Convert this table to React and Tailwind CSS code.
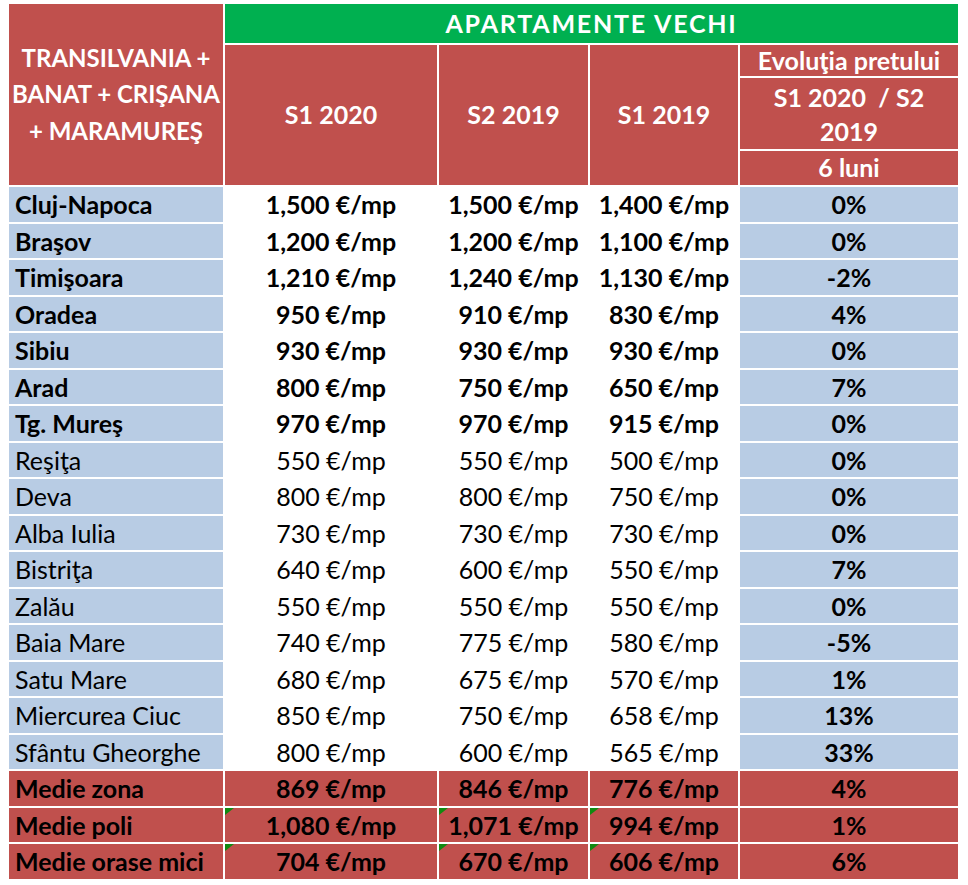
import React from "react";

const rows = [
  ["Cluj-Napoca", "1,500 €/mp", "1,500 €/mp", "1,400 €/mp", "0%", "b"],
  ["Braşov", "1,200 €/mp", "1,200 €/mp", "1,100 €/mp", "0%", "b"],
  ["Timişoara", "1,210 €/mp", "1,240 €/mp", "1,130 €/mp", "-2%", "b"],
  ["Oradea", "950 €/mp", "910 €/mp", "830 €/mp", "4%", "b"],
  ["Sibiu", "930 €/mp", "930 €/mp", "930 €/mp", "0%", "b"],
  ["Arad", "800 €/mp", "750 €/mp", "650 €/mp", "7%", "b"],
  ["Tg. Mureş", "970 €/mp", "970 €/mp", "915 €/mp", "0%", "b"],
  ["Reşiţa", "550 €/mp", "550 €/mp", "500 €/mp", "0%", "r"],
  ["Deva", "800 €/mp", "800 €/mp", "750 €/mp", "0%", "r"],
  ["Alba Iulia", "730 €/mp", "730 €/mp", "730 €/mp", "0%", "r"],
  ["Bistriţa", "640 €/mp", "600 €/mp", "550 €/mp", "7%", "r"],
  ["Zalău", "550 €/mp", "550 €/mp", "550 €/mp", "0%", "r"],
  ["Baia Mare", "740 €/mp", "775 €/mp", "580 €/mp", "-5%", "r"],
  ["Satu Mare", "680 €/mp", "675 €/mp", "570 €/mp", "1%", "r"],
  ["Miercurea Ciuc", "850 €/mp", "750 €/mp", "658 €/mp", "13%", "r"],
  ["Sfântu Gheorghe", "800 €/mp", "600 €/mp", "565 €/mp", "33%", "r"],
  ["Medie zona", "869 €/mp", "846 €/mp", "776 €/mp", "4%", "m"],
  ["Medie poli", "1,080 €/mp", "1,071 €/mp", "994 €/mp", "1%", "mt"],
  ["Medie orase mici", "704 €/mp", "670 €/mp", "606 €/mp", "6%", "mt"],
];

function Tri() {
  return (
    <svg className="absolute left-0 top-0" width="9" height="7" viewBox="0 0 9 7">
      <polygon points="0,0 9,0 0,7" fill="#118a11" />
    </svg>
  );
}

export default function App() {
  return (
    <div className="w-[968px] h-[885px] bg-white font-['Lato',sans-serif] text-[25px] text-black">
      <div className="pt-[4px] pl-[9px] grid grid-cols-[214px_212px_149px_148px_218px] grid-rows-[39px_140px_repeat(19,34.5px)] gap-x-[2px] gap-y-[2px]">
        <div className="row-span-2 bg-[#c0504d] text-white font-bold flex items-center justify-center text-center leading-[36.5px] text-[24px] whitespace-nowrap">
          <div>
            TRANSILVANIA +<br />BANAT + CRIŞANA<br />+ MARAMUREŞ
          </div>
        </div>
        <div className="col-span-4 bg-[#00b050] text-white font-bold flex items-center justify-center tracking-[1.8px]">
          APARTAMENTE VECHI
        </div>
        <div className="bg-[#c0504d] text-white font-bold flex items-center justify-center">S1 2020</div>
        <div className="bg-[#c0504d] text-white font-bold flex items-center justify-center">S2 2019</div>
        <div className="bg-[#c0504d] text-white font-bold flex items-center justify-center">S1 2019</div>
        <div className="flex flex-col gap-[2px] text-white font-bold">
          <div className="h-[31px] bg-[#c0504d] flex items-center justify-center">Evoluţia pretului</div>
          <div className="h-[71px] bg-[#c0504d] flex items-center justify-center text-center leading-[34px]">
            <div>
              S1 2020&nbsp; / S2
              <br />
              2019
            </div>
          </div>
          <div className="h-[34px] bg-[#c0504d] flex items-center justify-center">6 luni</div>
        </div>
        {rows.map((r) => {
          const kind = r[5];
          const med = kind === "m" || kind === "mt";
          const side = med ? "bg-[#c0504d]" : "bg-[#b8cce4]";
          const mid = med ? "bg-[#c0504d]" : "bg-white";
          const valW = kind === "r" ? "font-normal" : "font-bold";
          const nameW = kind === "r" ? "font-normal" : "font-bold";
          return (
            <React.Fragment key={r[0]}>
              <div className={`${side} ${nameW} flex items-center pl-[6px] pt-[1px] whitespace-nowrap`}>{r[0]}</div>
              <div className={`${mid} ${valW} relative flex items-center justify-center pt-[1px] whitespace-nowrap`}>
                {kind === "mt" && <Tri />}
                {r[1]}
              </div>
              <div className={`${mid} ${valW} relative flex items-center justify-center pt-[1px] whitespace-nowrap`}>
                {kind === "mt" && <Tri />}
                {r[2]}
              </div>
              <div className={`${mid} ${valW} relative flex items-center justify-center pt-[1px] whitespace-nowrap`}>
                {kind === "mt" && <Tri />}
                {r[3]}
              </div>
              <div className={`${side} font-bold flex items-center justify-center pt-[1px]`}>{r[4]}</div>
            </React.Fragment>
          );
        })}
      </div>
    </div>
  );
}
